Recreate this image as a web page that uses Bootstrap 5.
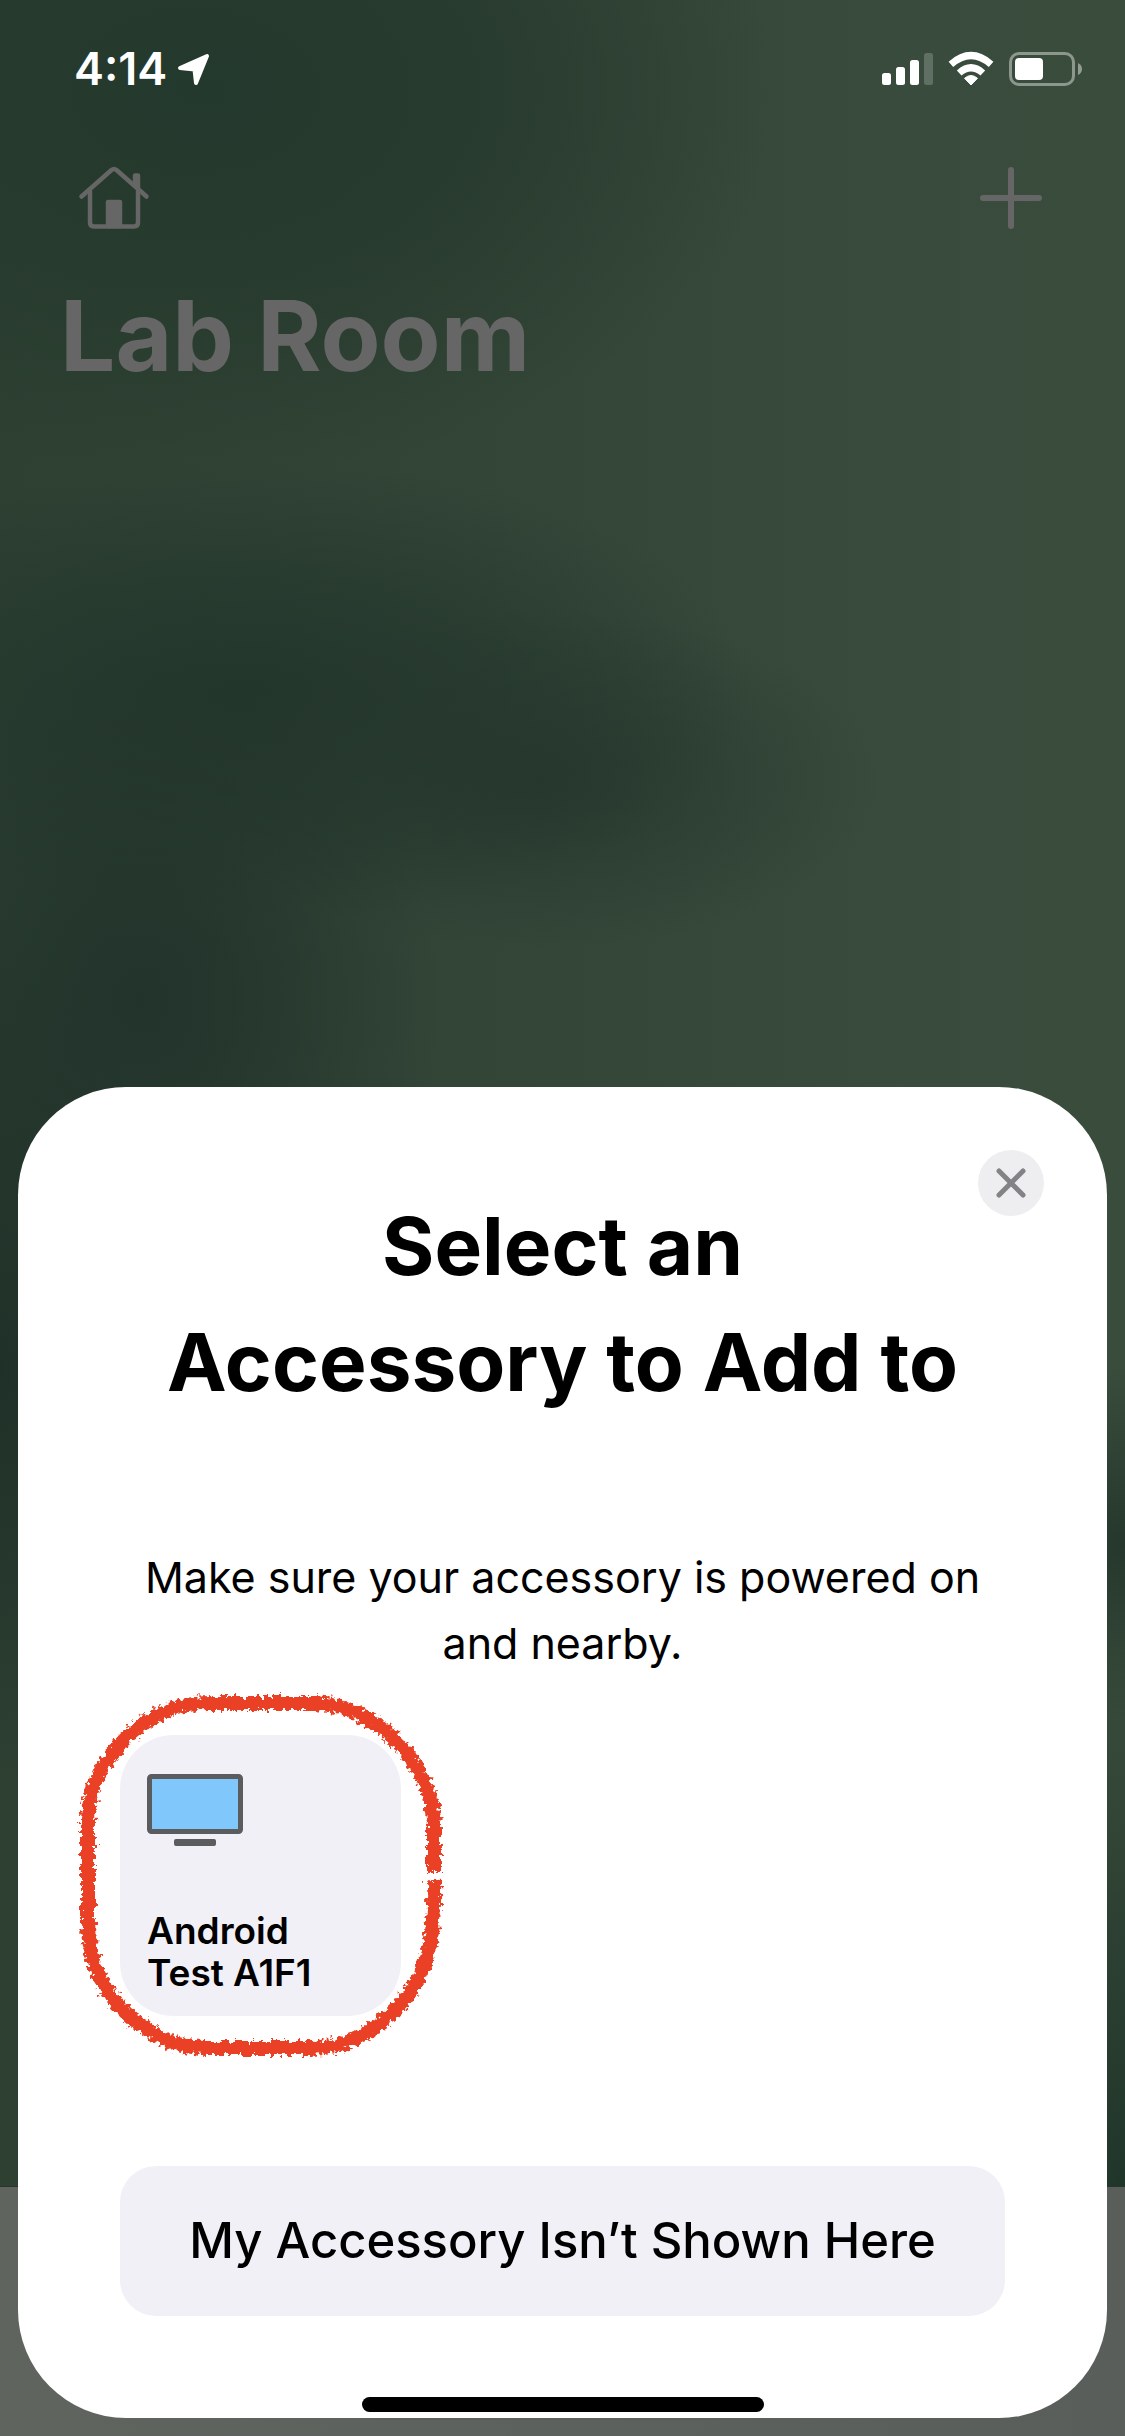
<!DOCTYPE html>
<html lang="en">
<head>
<meta charset="utf-8">
<meta name="viewport" content="width=device-width, initial-scale=1">
<title>Home – Add Accessory</title>
<link rel="stylesheet" href="https://cdn.jsdelivr.net/npm/bootstrap@5.3.0/dist/css/bootstrap.min.css">
<style>
  body { font-family: Inter, "Liberation Sans", sans-serif; color: #000; background: #35473a; }
  .home-screen {
    background:
      radial-gradient(ellipse 300px 360px at 140px 1000px, #20322aee 0%, #20322a88 45%, #20322a00 100%),
      radial-gradient(ellipse 340px 170px at 540px 780px, #24362ccc 0%, #24362c66 50%, #24362c00 100%),
      radial-gradient(ellipse 500px 230px at 250px 690px, #22352bee 0%, #22352b88 50%, #22352b00 100%),
      radial-gradient(ellipse 200px 420px at 0px 1370px, #1f3028ff 0%, #1f302800 100%),
      radial-gradient(ellipse 200px 180px at 100% 1545px, #26382dff 0%, #26382d00 100%),
      radial-gradient(ellipse 200px 560px at 100% 2200px, #20352aff 0%, #20352a00 100%),
      radial-gradient(ellipse 580px 390px at 200px 90px, #24392dff 0%, #263a2dee 45%, #263a2d00 100%),
      linear-gradient(90deg, #2d4032 0%, #344638 50%, #394b3c 80%, #3a4c3c 100%);
  }
  .dock-shade { height: 250px; background: linear-gradient(90deg, #5f645f, #5a5e5b); border-top: 1px solid #26362b; }
  .status-bar { height: 138px; padding: 0 43px 0 74px; color: #fff; }
  .clock { font-size: 45px; font-weight: 600; line-height: 60px; }
  .home-nav { height: 120px; padding: 0 72px; }
  .nav-btn { color: #666; line-height: 0; }
  .room-title { font-size: 98px; font-weight: 700; line-height: 120px; padding: 18px 60px 0; color: #666; }
  .sheet { margin: 0 18px 18px; padding: 101px 102px 102px; border-radius: 108px; background: #fff; }
  .sheet-close { top: 63px; right: 63px; width: 66px; height: 66px; background: #eeeef0; color: #838387; }
  .sheet-title { font-size: 80px; font-weight: 700; line-height: 116px; min-height: 348px; }
  .sheet-text { font-size: 43px; line-height: 66px; margin: 8px 0 59px; }
  .tile { width: 281px; height: 281px; border-radius: 54px; background: #f1f0f6; padding: 39px 27px 22px; }
  .tile-name { font-size: 37px; font-weight: 600; line-height: 42px; }
  .crayon { left: -50px; top: -50px; pointer-events: none; }
  .fallback { height: 150px; margin-top: 150px; border-radius: 36px; background: #f1f0f6; font-size: 49px; font-weight: 500; line-height: 60px; }
  .home-bar { bottom: 6px; width: 402px; height: 15px; background: #000; }
</style>
</head>
<body>
<div class="home-screen position-relative min-vh-100 d-flex flex-column">
  <div class="dock-shade position-absolute bottom-0 start-0 w-100"></div>

  <div class="status-bar d-flex align-items-center justify-content-between">
    <div class="d-flex align-items-center gap-2">
      <span class="clock">4:14</span>
      <svg width="36" height="34" viewBox="0 0 36 34" aria-label="Location in use"><path d="M5 16L32 4L21 31L19.500 17.500Z" fill="#fff" stroke="#fff" stroke-width="4" stroke-linejoin="round"/></svg>
    </div>
    <svg width="201" height="36" viewBox="0 0 201 36" fill="#fff" aria-label="Signal, Wi-Fi and battery">
      <rect x="1" y="22" width="9" height="12" rx="2.500"/>
      <rect x="15" y="16" width="9" height="18" rx="2.500"/>
      <rect x="29" y="9" width="9" height="25" rx="2.500"/>
      <rect x="43" y="2" width="9" height="32" rx="2.500" opacity=".2"/>
      <path d="M90 34L83.500 27.300Q90 21.700 96.500 27.300Z" stroke="#fff" stroke-width="1" stroke-linejoin="round"/>
      <path d="M78.200 22Q90 11.500 101.800 22" fill="none" stroke="#fff" stroke-width="7"/>
      <path d="M69.900 13.300Q90 -4.300 110.100 13.300" fill="none" stroke="#fff" stroke-width="7"/>
      <rect x="129.500" y="2.500" width="63" height="31" rx="8.500" fill="none" stroke="#fff" stroke-opacity=".42" stroke-width="3"/>
      <rect x="134" y="7" width="28" height="22" rx="4"/>
      <path d="M197 12q4 2 4 6t-4 6z" opacity=".45"/>
    </svg>
  </div>

  <nav class="home-nav d-flex align-items-center justify-content-between">
    <button type="button" class="nav-btn btn p-0 border-0" aria-label="Homes">
      <svg width="84" height="72" viewBox="0 0 84 72" fill="none" stroke="currentColor" stroke-width="4.500" stroke-linecap="round" stroke-linejoin="round">
        <path d="M9.500 34.500L39.500 8Q42 6 44.500 8L74.500 34.500"/>
        <path d="M18 29V60.500Q18 64.500 22 64.500H62Q66 64.500 66 60.500V29"/>
        <path d="M63 13.500h3v12l-3-2.500z"/>
        <path d="M36 40H48V64H36z" fill="currentColor"/>
      </svg>
    </button>
    <button type="button" class="nav-btn btn p-0 border-0" aria-label="Add">
      <svg width="84" height="72" viewBox="0 0 84 72" fill="none" stroke="currentColor" stroke-width="6" stroke-linecap="round"><path d="M42 8V64M14 36H70"/></svg>
    </button>
  </nav>
  <h1 class="room-title m-0">Lab Room</h1>

  <main class="sheet position-relative mt-auto" role="dialog" aria-labelledby="sheetTitle">
    <button type="button" class="sheet-close btn rounded-circle border-0 p-0 position-absolute d-flex align-items-center justify-content-center" aria-label="Close">
      <svg width="32" height="32" viewBox="0 0 32 32" stroke="currentColor" stroke-width="5" stroke-linecap="round"><path d="M4 4L28 28M28 4L4 28"/></svg>
    </button>
    <h2 id="sheetTitle" class="sheet-title text-center m-0">Select an<br>Accessory to Add to</h2>
    <p class="sheet-text text-center">Make sure your accessory is powered on<br>and nearby.</p>

    <div class="position-relative">
      <button type="button" class="tile btn border-0 text-start d-flex flex-column justify-content-between align-items-start">
        <svg width="96" height="74" viewBox="0 0 96 74">
          <rect x="2.500" y="2.500" width="91" height="55" rx="2" fill="#80c8fb" stroke="#5b5c5e" stroke-width="5"/>
          <rect x="27" y="65" width="42" height="7" rx="2" fill="#5b5c5e"/>
        </svg>
        <span class="tile-name text-black">Android<br>Test A1F1</span>
      </button>
      <svg class="crayon position-absolute" width="380" height="380" viewBox="0 0 380 380" aria-hidden="true">
        <filter id="rough" x="-5%" y="-5%" width="110%" height="110%">
          <feTurbulence type="fractalNoise" baseFrequency=".22" numOctaves="3" seed="7" result="n"/>
          <feDisplacementMap in="SourceGraphic" in2="n" scale="12" xChannelSelector="R" yChannelSelector="G"/>
        </filter>
        <path filter="url(#rough)" fill="none" stroke="#ea4025" stroke-width="14" d="M364 195C366 260 354 296 328 322C300 350 276 363 240 363H140C106 364 78 350 52 324C28 298 18 272 18 236V142C17 108 28 82 54 55C80 30 104 18 140 18H244C276 19 300 30 328 58C352 84 364 112 364 142V187"/>
      </svg>
    </div>

    <button type="button" class="fallback btn border-0 p-0 w-100 text-black">My Accessory Isn’t Shown Here</button>
    <div class="home-bar rounded-pill position-absolute start-50 translate-middle-x"></div>
  </main>
</div>
<script src="https://cdn.jsdelivr.net/npm/bootstrap@5.3.0/dist/js/bootstrap.bundle.min.js"></script>
</body>
</html>
